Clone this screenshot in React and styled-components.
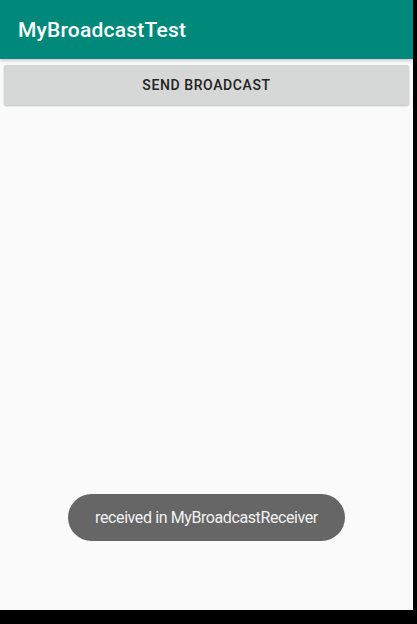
import React from 'react';
import styled, { createGlobalStyle } from 'styled-components';

const GlobalStyle = createGlobalStyle`
  html, body {
    margin: 0;
    padding: 0;
    background: #000;
  }
  * {
    box-sizing: border-box;
  }
`;

const DeviceFrame = styled.div`
  width: 417px;
  height: 624px;
  background: #000;
  overflow: hidden;
`;

const Screen = styled.div`
  position: relative;
  width: 413px;
  height: 610px;
  background: #fafafa;
  display: flex;
  flex-direction: column;
  font-family: Roboto, "Noto Sans", sans-serif;
`;

const AppBar = styled.header`
  height: 59px;
  background: #00897b;
  display: flex;
  align-items: center;
  padding: 0 18px;
  box-shadow: 0 2px 3px rgba(0, 0, 0, 0.18);
  z-index: 1;
`;

const Title = styled.h1`
  margin: 0;
  padding-top: 1px;
  font-size: 21px;
  font-weight: 500;
  color: #fff;
  letter-spacing: 0.2px;
`;

const Content = styled.main`
  flex: 1;
  padding: 6px 4px;
`;

const Button = styled.button`
  width: 100%;
  height: 40px;
  border: none;
  border-radius: 2px;
  background: #d6d7d7;
  box-shadow: 0 1px 2px rgba(0, 0, 0, 0.25);
  font-family: Roboto, "Noto Sans", sans-serif;
  font-size: 14px;
  font-weight: 500;
  color: #222;
  letter-spacing: 0.6px;
  text-transform: uppercase;
`;

const Toast = styled.div`
  position: absolute;
  left: 68px;
  top: 494px;
  width: 277px;
  height: 47px;
  border-radius: 24px;
  background: #666;
  display: flex;
  align-items: center;
  justify-content: center;
  color: #f2f2f2;
  font-size: 16px;
  letter-spacing: -0.4px;
`;

export default function App() {
  return (
    <>
      <GlobalStyle />
      <DeviceFrame>
        <Screen>
          <AppBar>
            <Title>MyBroadcastTest</Title>
          </AppBar>
          <Content>
            <Button>Send Broadcast</Button>
          </Content>
          <Toast>received in MyBroadcastReceiver</Toast>
        </Screen>
      </DeviceFrame>
    </>
  );
}
